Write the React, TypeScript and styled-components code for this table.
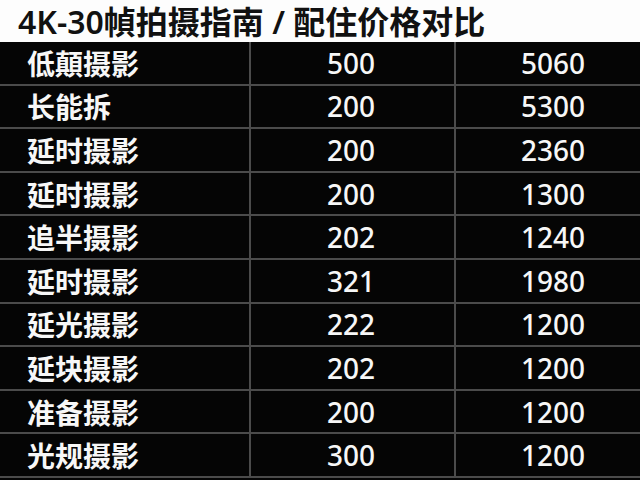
import * as React from 'react';
import styled, { createGlobalStyle } from 'styled-components';

const rows = [
	{ name: '低顛摄影', count: '500', price: '5060' },
	{ name: '长能拆', count: '200', price: '5300' },
	{ name: '延时摄影', count: '200', price: '2360' },
	{ name: '延时摄影', count: '200', price: '1300' },
	{ name: '追半摄影', count: '202', price: '1240' },
	{ name: '延时摄影', count: '321', price: '1980' },
	{ name: '延光摄影', count: '222', price: '1200' },
	{ name: '延块摄影', count: '202', price: '1200' },
	{ name: '准备摄影', count: '200', price: '1200' },
	{ name: '光规摄影', count: '300', price: '1200' },
];

export default function App() {
	return (
		<>
			<GlobalStyle />
			<Page>
				<Title>4K-30幀拍摄指南 / 配住价格对比</Title>
				<Table>
					{rows.map((row, i) => (
						<Row key={i}>
							<Cell $indent={27} $divider $strong>{row.name}</Cell>
							<Cell $indent={76} $divider>{row.count}</Cell>
							<Cell $indent={65}>{row.price}</Cell>
						</Row>
					))}
				</Table>
			</Page>
		</>
	);
}

const GlobalStyle = createGlobalStyle`
	html, body {
		margin: 0;
		padding: 0;
		background: #050505;
	}
	body {
		font-family: "Noto Sans", "Noto Sans CJK SC", sans-serif;
	}
`;

const Page = styled.div`
	width: 640px;
	height: 480px;
	overflow: hidden;
	background: #050505;
`;

const Title = styled.div`
	display: flex;
	align-items: center;
	height: 42px;
	box-sizing: border-box;
	padding: 3px 0 0 18px;
	background: #fdfdfd;
	color: #111;
	font-size: 32px;
	font-weight: 600;
	line-height: 1.2;
	white-space: nowrap;
`;

const Table = styled.div`
	display: flex;
	flex-direction: column;
`;

const Row = styled.div`
	display: grid;
	grid-template-columns: 251px 205px 1fr;
	height: 43.6px;
	box-sizing: border-box;
	border-bottom: 2px solid #4b4b4b;
`;

const Cell = styled.div<{ $indent: number; $divider?: boolean; $strong?: boolean }>`
	display: flex;
	align-items: center;
	padding-left: ${p => p.$indent}px;
	border-right: ${p => (p.$divider ? '2px solid #4b4b4b' : 'none')};
	color: #f7f7f7;
	font-size: 28px;
	font-weight: ${p => (p.$strong ? 600 : 500)};
	white-space: nowrap;
`;
